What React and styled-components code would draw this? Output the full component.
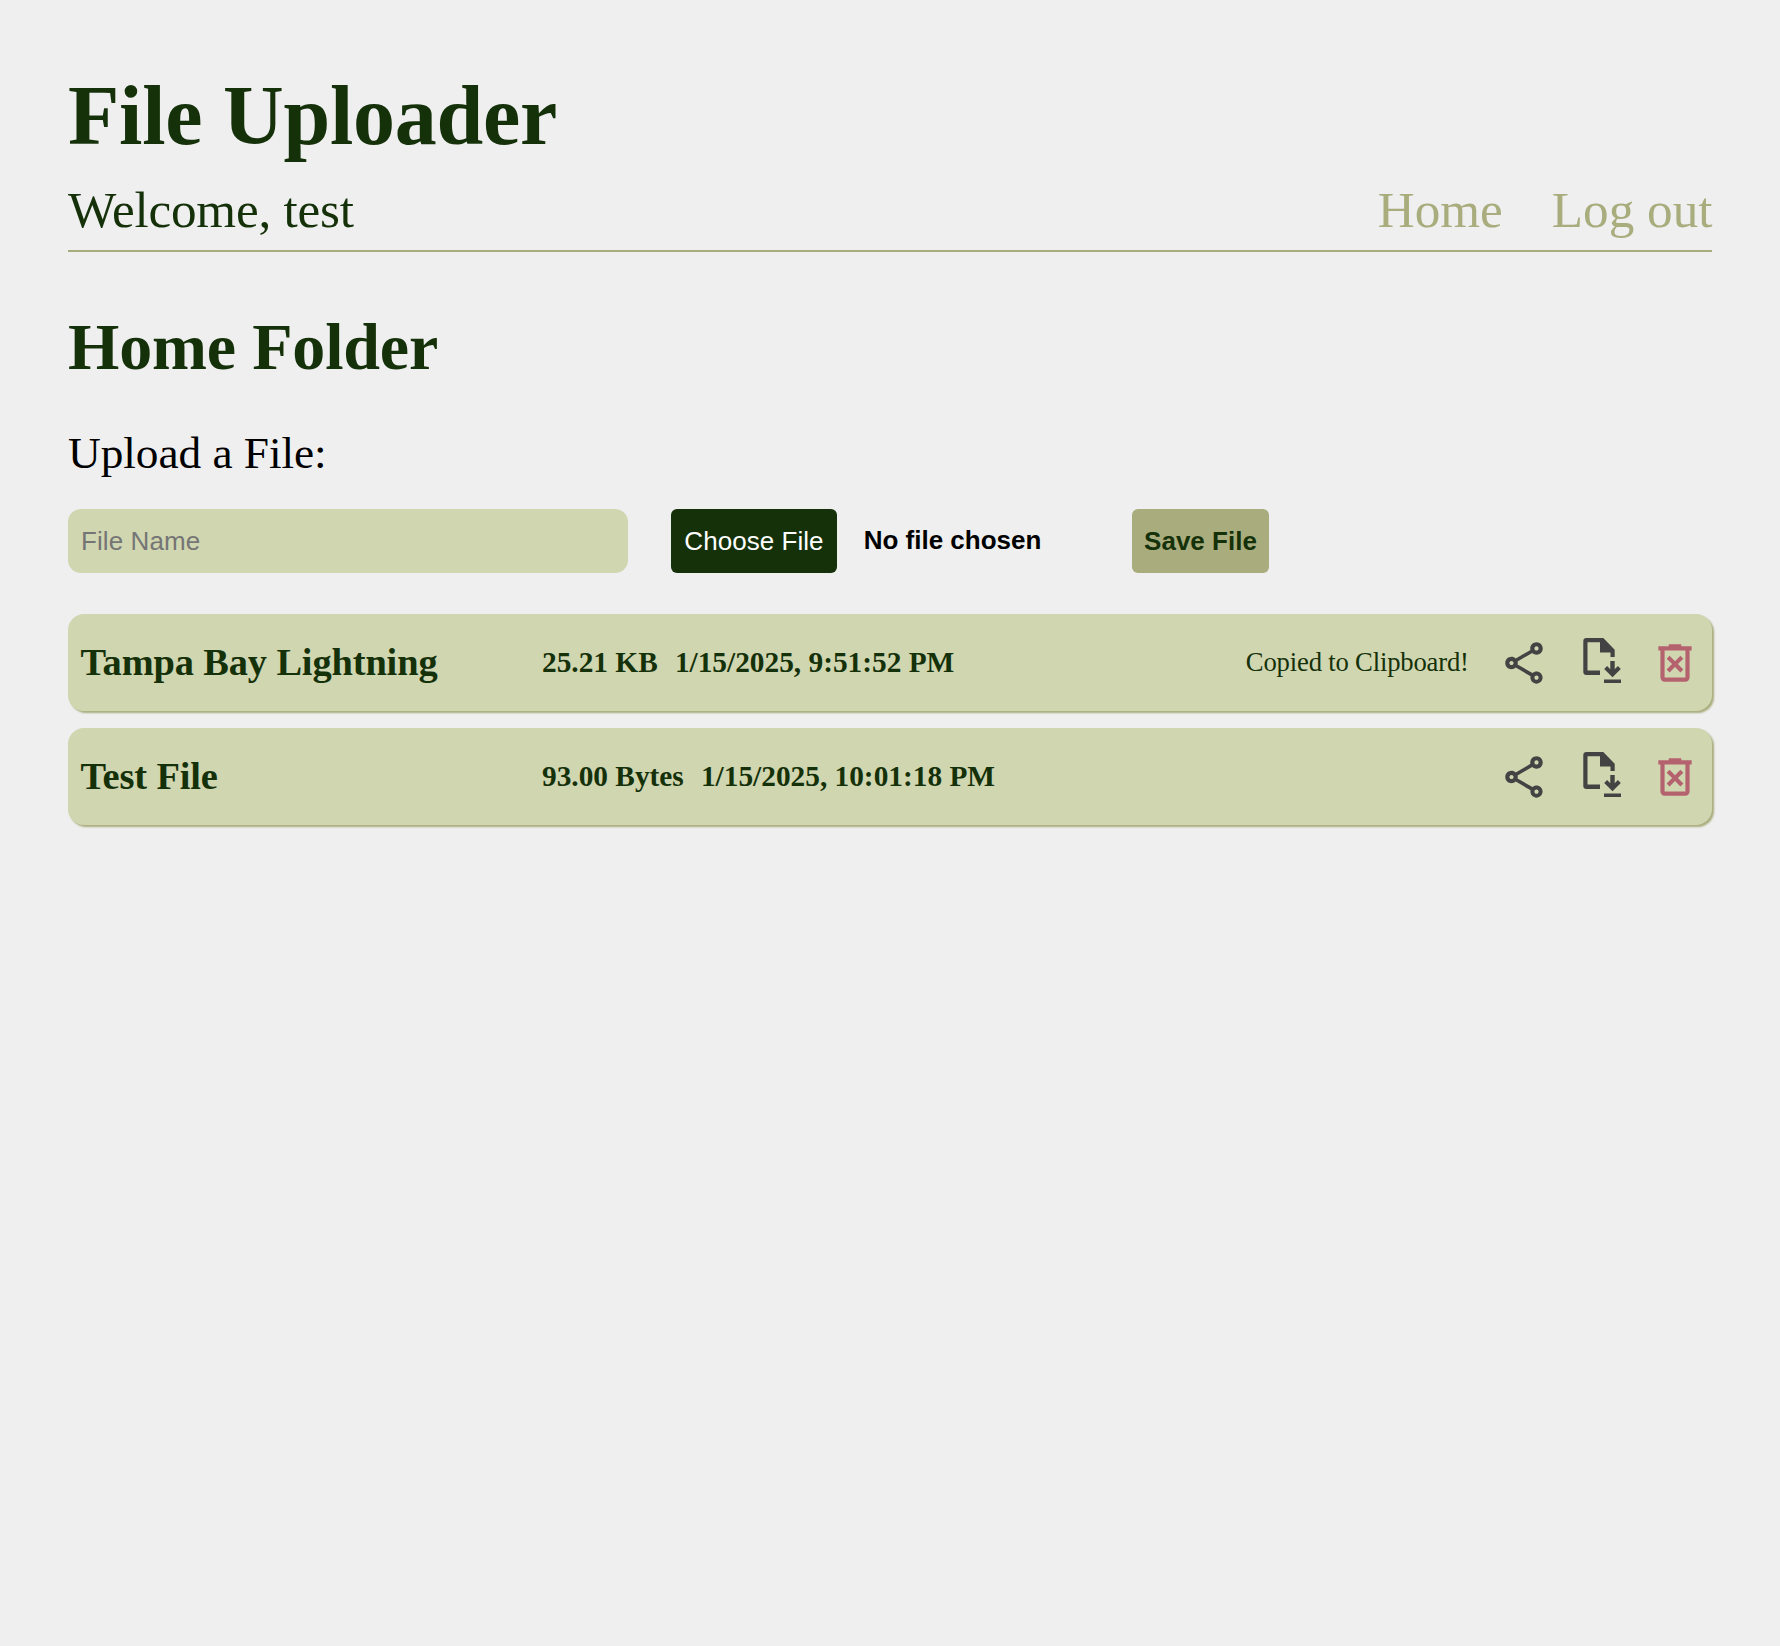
import React from "react";
import styled, { createGlobalStyle } from "styled-components";

const color = {
  page: "#efefef",
  dark: "#15310a",
  olive: "#a9ad7d",
  card: "#d0d6b0",
  icon: "#434343",
  danger: "#b5626f",
};

const GlobalStyle = createGlobalStyle`
  * { box-sizing: border-box; }
  body {
    margin: 0;
    background: ${color.page};
    color: ${color.dark};
    font-family: "Liberation Serif", "Times New Roman", serif;
  }
`;

const Page = styled.div`
  min-height: 1646px;
  padding: 68px;
`;

const Title = styled.h1`
  margin: 0 0 18px;
  font-size: 84px;
  line-height: 95px;
  letter-spacing: -0.25px;
`;

const SubHeader = styled.header`
  display: flex;
  justify-content: space-between;
  padding-bottom: 12px;
  border-bottom: 2px solid ${color.olive};
  font-size: 51.2px;
  line-height: 57px;
`;

const Welcome = styled.span`
  letter-spacing: -0.22px;
`;

const Nav = styled.nav`
  display: flex;
  gap: 49px;
  margin-right: -0.5px;
`;

const NavLink = styled.a`
  color: ${color.olive};
  text-decoration: none;
`;

const FolderTitle = styled.h2`
  margin: 58px 0 45px;
  font-size: 66px;
  line-height: 73px;
  letter-spacing: -0.18px;
`;

const UploadLabel = styled.p`
  margin: 0 0 31px;
  color: #000;
  font-size: 45.33px;
  line-height: 50px;
  letter-spacing: -0.05px;
`;

const UploadForm = styled.form`
  display: flex;
  align-items: center;
  height: 64px;
  margin-bottom: 41px;
  font: 26px "Liberation Sans", Arial, sans-serif;
`;

const NameInput = styled.input`
  width: 560px;
  height: 64px;
  margin: 0 43px 0 0;
  padding: 0 13px;
  border: 0;
  border-radius: 13px;
  background: ${color.card};
  font: inherit;
  letter-spacing: 0.1px;
  &::placeholder {
    color: #757575;
    opacity: 1;
  }
`;

const Button = styled.button`
  width: ${(p) => p.$width}px;
  height: 64px;
  padding: 0;
  border: 0;
  border-radius: 6px;
  background: ${(p) => (p.$primary ? color.dark : color.olive)};
  color: ${(p) => (p.$primary ? "#fff" : color.dark)};
  font: inherit;
  font-weight: ${(p) => (p.$primary ? 400 : 700)};
  letter-spacing: ${(p) => (p.$primary ? 0.05 : 0)}px;
`;

const ChosenFile = styled.span`
  width: 268.3px;
  margin-left: 26.7px;
  padding-bottom: 2px;
  color: #000;
  font-weight: 700;
`;

const FileList = styled.ul`
  display: flex;
  flex-direction: column;
  gap: 17px;
  margin: 0;
  padding: 0;
  list-style: none;
`;

const FileRow = styled.li`
  display: flex;
  align-items: center;
  height: 97px;
  padding: 0 12px;
  border-radius: 16px;
  background: ${color.card};
  box-shadow: 2px 2px 2px ${color.olive};
`;

const FileName = styled.span`
  width: 462px;
  padding: 0 0 1px 0.6px;
  font-size: 38.4px;
  font-weight: 700;
  line-height: 42px;
  letter-spacing: -0.12px;
`;

const Details = styled.div`
  display: flex;
  flex: 1;
  gap: 17.2px;
  padding-bottom: 1px;
  font-size: 29.33px;
  font-weight: 700;
  line-height: 32px;
`;

const Notice = styled.span`
  margin-right: 30.2px;
  padding-bottom: 1px;
  font-size: 26.667px;
  line-height: 30px;
  letter-spacing: -0.18px;
`;

const Actions = styled.div`
  display: flex;
  gap: 25.5px;
  padding-top: 1px;
`;

const Icon = styled.svg`
  display: block;
  width: 50px;
  height: 50px;
  fill: ${(p) => (p.$danger ? color.danger : color.icon)};
`;

const ShareIcon = () => (
  <Icon viewBox="0 0 24 24">
    <path d="M18 16.08c-.76 0-1.44.3-1.96.77L8.91 12.7c.05-.23.09-.46.09-.7s-.04-.47-.09-.7l7.05-4.11c.54.5 1.25.81 2.04.81 1.66 0 3-1.34 3-3s-1.34-3-3-3-3 1.34-3 3c0 .24.04.47.09.7L8.04 9.81C7.5 9.31 6.79 9 6 9c-1.66 0-3 1.34-3 3s1.34 3 3 3c.79 0 1.5-.31 2.04-.81l7.12 4.16c-.05.21-.08.43-.08.65 0 1.61 1.31 2.92 2.92 2.92s2.92-1.31 2.92-2.92-1.31-2.92-2.92-2.92zM18 4c.55 0 1 .45 1 1s-.45 1-1 1-1-.45-1-1 .45-1 1-1zM6 13c-.55 0-1-.45-1-1s.45-1 1-1 1 .45 1 1-.45 1-1 1zm12 7.02c-.55 0-1-.45-1-1s.45-1 1-1 1 .45 1 1-.45 1-1 1z" />
  </Icon>
);

const DownloadIcon = () => (
  <Icon viewBox="0.5 0 50 50">
    <path d="M12 .1H28.8L40.2 11.7V18.9H36V14.6H25.5V4.2H13V32.6H25.5V36.9H12Q8.8 36.9 8.8 33.7V3.3Q8.8 .1 12 .1Z" />
    <path d="M35.8 23h4.4v8.2l3.2-3.1 2.9 2.9L38 39.3 29.7 31l2.9-2.9 3.2 3.1zM29.5 41.6h17V45h-17z" />
  </Icon>
);

const DeleteIcon = () => (
  <Icon $danger viewBox="0 -960 960 960">
    <path d="m376-300 104-104 104 104 56-56-104-104 104-104-56-56-104 104-104-104-56 56 104 104-104 104 56 56Zm-96 180q-33 0-56.5-23.5T200-200v-520h-40v-80h200v-40h240v40h200v80h-40v520q0 33-23.5 56.5T680-120H280Zm400-600H280v520h400v-520Z" />
  </Icon>
);

const files = [
  { name: "Tampa Bay Lightning", size: "25.21 KB", date: "1/15/2025, 9:51:52 PM", copied: true },
  { name: "Test File", size: "93.00 Bytes", date: "1/15/2025, 10:01:18 PM", copied: false },
];

export default function App() {
  return (
    <Page>
      <GlobalStyle />
      <Title>File Uploader</Title>
      <SubHeader>
        <Welcome>Welcome, test</Welcome>
        <Nav>
          <NavLink>Home</NavLink>
          <NavLink>Log out</NavLink>
        </Nav>
      </SubHeader>
      <FolderTitle>Home Folder</FolderTitle>
      <UploadLabel>Upload a File:</UploadLabel>
      <UploadForm>
        <NameInput placeholder="File Name" />
        <Button type="button" $primary $width={166}>Choose File</Button>
        <ChosenFile>No file chosen</ChosenFile>
        <Button type="button" $width={137}>Save File</Button>
      </UploadForm>
      <FileList>
        {files.map((file) => (
          <FileRow key={file.name}>
            <FileName>{file.name}</FileName>
            <Details>
              <span>{file.size}</span>
              <span>{file.date}</span>
            </Details>
            {file.copied && <Notice>Copied to Clipboard!</Notice>}
            <Actions>
              <ShareIcon />
              <DownloadIcon />
              <DeleteIcon />
            </Actions>
          </FileRow>
        ))}
      </FileList>
    </Page>
  );
}
